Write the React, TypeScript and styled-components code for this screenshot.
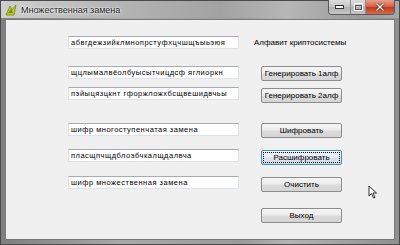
import React from "react";
import styled, { createGlobalStyle, css } from "styled-components";

const GlobalStyle = createGlobalStyle`
  html, body { margin: 0; padding: 0; width: 400px; height: 245px; overflow: hidden; background: #ffffff; }
  * { box-sizing: border-box; }
`;

const Window = styled.div`
  width: 400px;
  height: 245px;
  display: flex;
  flex-direction: column;
  background: linear-gradient(90deg, #7e7e7e 0%, #a9a9a9 30%, #9a9a9a 60%, #b4b4b4 72%, #8f8f8f 100%);
  border: 1px solid #4a4a4a;
  font-family: "Liberation Sans", Arial, sans-serif;
`;

const TitleBar = styled.div`
  height: 17px;
  display: flex;
  align-items: flex-start;
  padding-left: 4px;
  background: linear-gradient(90deg, #cfcfcf 0%, #b8b8b8 25%, #a2a2a2 55%, #b6b6b6 72%, #9c9c9c 90%, #a8a8a8 100%);
`;

const AppIcon = styled.svg`
  width: 12px;
  height: 12px;
  margin-top: 3px;
  flex: none;
`;

const Title = styled.span`
  margin-left: 4px;
  margin-top: 4px;
  font-size: 9px;
  line-height: 10px;
  color: #1a1a1a;
  text-shadow: 0 0 3px #ffffff, 0 0 2px #ffffff;
  flex: 1;
`;

const Controls = styled.div`
  display: flex;
  margin-right: 4px;
  margin-top: -1px;
  border: 1px solid #5a5a5a;
  border-top: none;
  border-radius: 0 0 4px 4px;
  overflow: hidden;
  height: 15px;
`;

const CtrlBtn = styled.div<{ $w: number; $close?: boolean }>`
  width: ${(p) => p.$w}px;
  height: 100%;
  display: flex;
  align-items: center;
  justify-content: center;
  background: linear-gradient(180deg, #dcdcdc 0%, #c4c4c4 50%, #b0b0b0 51%, #c6c6c6 100%);
  border-left: 1px solid #8a8a8a;
  &:first-child { border-left: none; }
  ${(p) =>
    p.$close &&
    css`
      background: linear-gradient(180deg, #e8a08c 0%, #d45a3e 50%, #c0391c 51%, #d26a4e 100%);
    `}
`;

const Client = styled.div`
  flex: 1;
  margin: 1px 4px 4px 4px;
  background: #f0f0f0;
  border: 1px solid #7a7a7a;
  display: flex;
  flex-direction: column;
  padding-left: 62px;
  position: relative;
`;

const Row = styled.div<{ $top: number }>`
  display: flex;
  align-items: flex-start;
  margin-top: ${(p) => p.$top}px;
`;

const TextBox = styled.div<{ $empty?: boolean }>`
  width: 171px;
  height: 13px;
  flex: none;
  background: ${(p) => (p.$empty ? "transparent" : "#ffffff")};
  border: 1px solid #dfe3e8;
  border-top-color: #a8abb0;
  font-size: 7.5px;
  line-height: 11px;
  padding-left: 2px;
  color: #000;
  white-space: nowrap;
  overflow: hidden;
  letter-spacing: 0.5px;
  visibility: ${(p) => (p.$empty ? "hidden" : "visible")};
`;

const Label = styled.span`
  margin-left: 15px;
  margin-top: 1px;
  font-size: 8px;
  line-height: 11px;
  color: #000;
  white-space: nowrap;
`;

const Button = styled.div<{ $focused?: boolean; $shift?: number }>`
  margin-left: 22px;
  margin-top: ${(p) => p.$shift ?? 0}px;
  width: 81px;
  height: 15px;
  flex: none;
  border: 1px solid #8c8c8c;
  border-radius: 2px;
  background: linear-gradient(180deg, #f6f6f6 0%, #ececec 48%, #dcdcdc 52%, #d4d4d4 100%);
  display: flex;
  align-items: center;
  justify-content: center;
  font-size: 8px;
  color: #000;
  white-space: nowrap;
  position: relative;
  ${(p) =>
    p.$focused &&
    css`
      border-color: #3c8fc0;
      background: linear-gradient(180deg, #f2f7fb 0%, #e6eef5 48%, #d9e3ec 52%, #d2dde6 100%);
      &::after {
        content: "";
        position: absolute;
        inset: 1px;
        border: 1px dotted #000;
      }
    `}
`;

const Cursor = styled.svg`
  position: absolute;
  left: 362px;
  top: 165px;
  width: 10px;
  height: 14px;
`;

export default function App() {
  return (
    <>
      <GlobalStyle />
      <Window>
        <TitleBar>
          <AppIcon viewBox="0 0 12 12">
            <path d="M1 11 L5 2 L7 6 L11 1 L9 11 Z" fill="#d9c21a" stroke="#6a8a12" strokeWidth="0.8" />
            <path d="M3 9 L6 5 L8 9" fill="#4c9a2a" />
          </AppIcon>
          <Title>Множественная замена</Title>
          <Controls>
            <CtrlBtn $w={21}>
              <svg width="9" height="4" viewBox="0 0 9 4">
                <rect x="0.5" y="0.5" width="8" height="3" fill="#fff" stroke="#333" strokeWidth="1" />
              </svg>
            </CtrlBtn>
            <CtrlBtn $w={15}>
              <svg width="9" height="8" viewBox="0 0 9 8">
                <rect x="0.5" y="0.5" width="8" height="7" fill="none" stroke="#fff" strokeWidth="1" />
                <rect x="1.5" y="2.5" width="6" height="4" fill="none" stroke="#555" strokeWidth="1" />
              </svg>
            </CtrlBtn>
            <CtrlBtn $w={29} $close>
              <svg width="10" height="8" viewBox="0 0 10 8">
                <path d="M1.5 0.5 L8.5 7.5 M8.5 0.5 L1.5 7.5" stroke="#5a1a10" strokeWidth="2.6" />
                <path d="M1.5 0.5 L8.5 7.5 M8.5 0.5 L1.5 7.5" stroke="#ffffff" strokeWidth="1.4" />
              </svg>
            </CtrlBtn>
          </Controls>
        </TitleBar>
        <Client>
          <Row $top={16}>
            <TextBox>абвгдежзийклмнопрстуфхцчшщъыьэюя</TextBox>
            <Label>Алфавит криптосистемы</Label>
          </Row>
          <Row $top={17}>
            <TextBox>щцлымалвёолбуысытчицдсф яглиоркн</TextBox>
            <Button>Генерировать 1алф</Button>
          </Row>
          <Row $top={6}>
            <TextBox>пэйыцязцкнт гфоржложхбсщвешидвчьы</TextBox>
            <Button $shift={1}>Генерировать 2алф</Button>
          </Row>
          <Row $top={20}>
            <TextBox>шифр многоступенчатая замена</TextBox>
            <Button>Шифровать</Button>
          </Row>
          <Row $top={11}>
            <TextBox>пласщпчщдблоэбчкалщдалвча</TextBox>
            <Button $focused $shift={1}>Расшифровать</Button>
          </Row>
          <Row $top={11}>
            <TextBox>шифр множественная замена</TextBox>
            <Button $shift={1}>Очистить</Button>
          </Row>
          <Row $top={16}>
            <TextBox $empty />
            <Button>Выход</Button>
          </Row>
          <Cursor viewBox="0 0 10 14">
            <path d="M1 1 L1 11 L3.5 8.5 L5.5 13 L7 12.3 L5 8 L8.5 8 Z" fill="#ffffff" stroke="#000" strokeWidth="0.8" />
          </Cursor>
        </Client>
      </Window>
    </>
  );
}
